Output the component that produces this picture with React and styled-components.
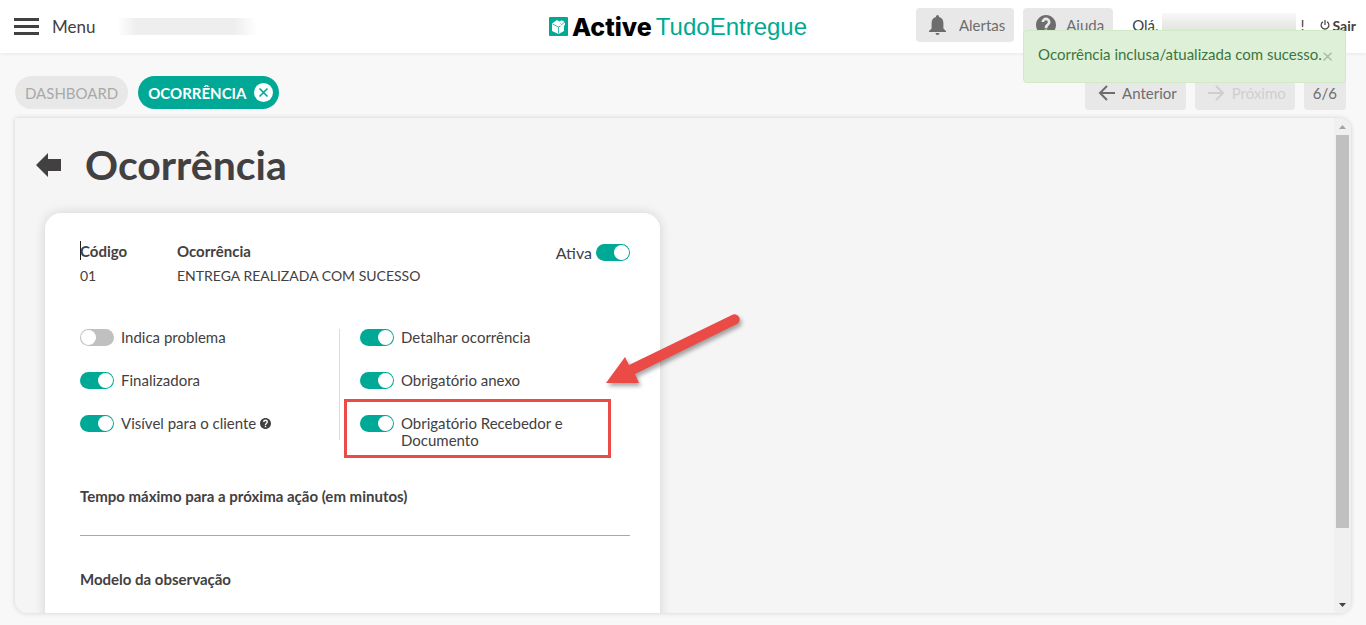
import React, { useState } from 'react';
import styled, { createGlobalStyle } from 'styled-components';

const GlobalStyle = createGlobalStyle`
  * {
    box-sizing: border-box;
  }
  body {
    margin: 0;
    background: #f8f8f8;
    color: #434041;
    font-family: Lato, "Open Sans", sans-serif;
    font-size: 15px;
  }
  button, input {
    font: inherit;
    color: inherit;
  }
`;

const Page = styled.div`
  display: flex;
  flex-direction: column;
  height: 100vh;
  position: relative;
`;

const Header = styled.header`
  display: grid;
  grid-template-columns: 1fr auto 1fr;
  align-items: center;
  height: 53px;
  padding-right: 10px;
  background: #fff;
  box-shadow: 0 0 4px rgba(0, 0, 0, .1);
`;

const HeaderLeft = styled.div`
  display: flex;
  align-items: center;
  gap: 22px;
  padding-left: 14px;
`;

const MenuButton = styled.button`
  display: flex;
  align-items: center;
  gap: 13px;
  padding: 0;
  border: none;
  background: none;
  font-size: 17px;
`;

const CompanyName = styled.span`
  width: 140px;
  height: 17px;
  background: linear-gradient(90deg, #eeeeee00, #eee 14%, #eee 84%, #eeeeee00);
`;

const UserName = styled.span`
  width: 134px;
  height: 24px;
  background: linear-gradient(#f8f8f8, #d9ddd6);
`;

const Logo = styled.a`
  display: flex;
  align-items: center;
  gap: 4px;
  color: #00a993;
  text-decoration: none;
  font: 24px/28px "Liberation Sans", Arial, sans-serif;
`;

const LogoStrong = styled.strong`
  color: #000;
  font-family: Inter, sans-serif;
  font-size: 25px;
  font-weight: 800;
`;

const HeaderRight = styled.div`
  display: flex;
  align-items: center;
  align-self: start;
  justify-content: flex-end;
  gap: 9px;
  height: 50px;
`;

const Greeting = styled.div`
  display: flex;
  align-items: center;
  gap: 4px;
  padding: 0 6px 0 10px;
`;

const LogoutButton = styled.button`
  display: flex;
  align-items: center;
  gap: 3px;
  padding: 0;
  border: none;
  background: none;
  font-size: 14px;
  font-weight: bold;
`;

const GreyButton = styled.button`
  display: flex;
  align-items: center;
  justify-content: center;
  gap: ${props => props.$gap || 7}px;
  height: 34px;
  padding: 0 9px 0 ${props => props.$plain ? 9 : 13}px;
  border: none;
  border-radius: 4px;
  background: #e8e8e8;
  color: #6d6d6d;
  &:disabled {
    color: #cfcfcf;
  }
`;

const Toolbar = styled.div`
  display: flex;
  align-items: flex-start;
  justify-content: space-between;
  padding: 23px 20px 8px 15px;
`;

const Tabs = styled.nav`
  display: flex;
  gap: 10px;
`;

const Tab = styled.div`
  display: flex;
  align-items: center;
  gap: 8px;
  height: 33px;
  padding: 0 ${props => props.$active ? 6 : 10}px 0 10px;
  border-radius: 17px;
  background: ${props => props.$active ? '#00a996' : '#e8e8e8'};
  font-weight: ${props => props.$active ? 'bold' : 'normal'};
`;

const TabLink = styled.a`
  color: ${props => props.$active ? '#fff' : '#a9a9a9'};
  text-decoration: none;
`;

const CloseTab = styled.button`
  display: flex;
  padding: 0;
  border: none;
  background: none;
`;

const Pager = styled.div`
  display: flex;
  gap: 9px;
`;

const Panel = styled.main`
  display: flex;
  flex: 1;
  min-height: 0;
  margin: 0 15px 12px;
  border-radius: 0 12px 12px 12px;
  background: #f5f5f5;
  box-shadow: 0 0 5px rgba(0, 0, 0, .16);
  overflow: hidden;
`;

const PanelBody = styled.div`
  flex: 1;
  padding: 19px 20px 0;
  overflow: hidden;
`;

const ScrollRail = styled.div`
  display: flex;
  flex-direction: column;
  align-items: center;
  width: 17px;
  padding: 6px 0 5px;
  background: #f0f0f0;
`;

const ScrollTrack = styled.div`
  flex: 1;
  width: 13px;
  margin: 5px 0;
`;

const ScrollThumb = styled.div`
  height: 85%;
  background: #c0c0c0;
`;

const TitleRow = styled.div`
  display: flex;
  align-items: center;
  gap: 24px;
  padding-left: 1px;
  margin-bottom: 20px;
`;

const BackButton = styled.button`
  display: flex;
  padding: 0;
  border: none;
  background: none;
`;

const Title = styled.h1`
  margin: 0;
  font-size: 41px;
  line-height: 56px;
`;

const Card = styled.section`
  width: 100%;
  max-width: 615px;
  margin-left: 10px;
  padding: 28px 30px 60px 35px;
  border-radius: 16px;
  background: #fff;
  box-shadow: 0 0 12px rgba(0, 0, 0, .14);
`;

const Summary = styled.div`
  display: grid;
  grid-template-columns: 97px 1fr auto;
  margin-bottom: 43px;
`;

const Field = styled.div`
  display: flex;
  flex-direction: column;
  gap: 5px;
  line-height: 20px;
`;

const FieldLabel = styled.strong`
  position: relative;
`;

const FieldValue = styled.span`
  font-size: 14px;
`;

const Caret = styled.span`
  position: absolute;
  left: 0;
  top: 0;
  width: 1px;
  height: 19px;
  background: #222;
`;

const Options = styled.div`
  display: grid;
  grid-template-columns: 260px 1fr;
  margin-bottom: 37px;
`;

const OptionColumn = styled.div`
  display: flex;
  flex-direction: column;
  gap: 26px;
  align-self: start;
  padding: ${props => props.$divided ? '0 0 8px' : '0 30px 0 20px'};
  border-right: ${props => props.$divided ? '1px solid #dcdcdc' : 'none'};
`;

const Option = styled.div`
  display: flex;
  align-items: flex-start;
  gap: ${props => props.$tight ? 4 : 7}px;
  position: relative;
  line-height: 17px;
  height: ${props => props.$tight ? '23px' : 'auto'};
  padding-top: ${props => props.$tight ? 3 : 0}px;
  font-size: ${props => props.$tight ? 16 : 15}px;
`;

const Switch = styled.input`
  flex: none;
  appearance: none;
  width: 34px;
  height: 17px;
  margin: 0;
  padding: 1px;
  border-radius: 9px;
  background: #c0c0c0;
  &::before {
    content: '';
    display: block;
    width: 15px;
    height: 15px;
    border-radius: 50%;
    background: #fff;
  }
  &:checked {
    background: #00a996;
  }
  &:checked::before {
    margin-left: auto;
  }
`;

const Highlight = styled.div`
  position: absolute;
  left: -16px;
  top: -16px;
  width: 267px;
  height: 59px;
  border: 3px solid #eb4b46;
  pointer-events: none;
`;

const Pointer = styled.svg`
  position: absolute;
  left: 240px;
  top: -114px;
  pointer-events: none;
  filter: drop-shadow(2px 3px 2px rgba(0, 0, 0, .35));
`;

const InputGroup = styled.div`
  display: flex;
  flex-direction: column;
  margin-bottom: 33px;
  line-height: 20px;
`;

const InputLabel = styled.label`
  font-weight: bold;
`;

const TextInput = styled.input`
  height: 30px;
  padding: 0;
  border: none;
  border-bottom: 1px solid #a9a9a9;
  background: none;
  outline: none;
`;

const Toast = styled.div`
  display: flex;
  align-items: flex-start;
  position: absolute;
  top: 30px;
  right: 20px;
  width: 323px;
  height: 53px;
  padding: 13px 14px;
  border: 1px solid #d0e9c6;
  border-radius: 4px;
  background: #dff0d8;
  color: #3c763d;
  line-height: 20px;
  white-space: nowrap;
`;

const ToastClose = styled.button`
  padding: 0;
  border: none;
  background: none;
  color: #a9bda5;
  font-size: 20px;
  line-height: 22px;
`;

const HamburgerIcon = () => (
  <svg width="25" height="17" viewBox="0 0 25 17" fill="#434041">
    <path d="M0 0h25v3H0zM0 7h25v3H0zM0 14h25v3H0z" />
  </svg>
);

const LogoIcon = () => (
  <svg width="19" height="19" viewBox="0 0 19 19">
    <rect width="19" height="19" rx="1" fill="#00a993" />
    <path d="M3 6.500L8 3l2.500 1.500a3 3 0 1 1 4.500 4.500v5L9.500 17 3 14z" fill="#fff" />
    <path d="M3.500 7l6 3M9.500 10v6.500M9.500 10l2-1M11.500 6.500l1.200 1.200L16 4.500" fill="none" stroke="#00a993" strokeWidth=".8" />
  </svg>
);

const BellIcon = () => (
  <svg width="17" height="20" viewBox="0 0 17 20" fill="#6d6d6d">
    <path d="M8.500 0a1.500 1.500 0 0 0-1.500 1.500v.6C4.200 2.800 2.600 5 2.600 8v5.500L0 16v1h17v-1l-2.600-2.500V8c0-3-1.600-5.200-4.400-5.900v-.6A1.500 1.500 0 0 0 8.500 0zM6.500 18a2 2 0 0 0 4 0z" />
  </svg>
);

const HelpIcon = ({ size, color }) => (
  <svg width={size} height={size} viewBox="2 2 20 20" fill={color}>
    <path d="M12 2C6.480 2 2 6.480 2 12s4.480 10 10 10 10-4.480 10-10S17.520 2 12 2zm1.300 17h-2.600v-2.600h2.600V19zm2.500-7.700l-.9.900c-.9.900-1.500 1.500-1.500 3h-2.700v-.6c0-1.100.5-2.100 1.200-2.800l1.300-1.300c.4-.3.600-.8.600-1.400a1.800 1.800 0 0 0-3.600 0H7.500a4.500 4.500 0 0 1 9 0c0 .9-.2 1.600-.7 2.200z" />
  </svg>
);

const ArrowIcon = ({ flip }) => (
  <svg width="17" height="16" viewBox="0 0 17 16" fill="none" stroke="currentColor" strokeWidth="2">
    <path d={flip ? 'M0 8h15M8 1l7 7-7 7' : 'M17 8H2M9 1L2 8l7 7'} />
  </svg>
);

const PowerIcon = () => (
  <svg width="10" height="10" viewBox="0 0 10 10" fill="none" stroke="#434041" strokeWidth="1.200">
    <path d="M3 1.800a3.900 3.900 0 1 0 4 0M5 0v5" />
  </svg>
);

const CloseIcon = () => (
  <svg width="19" height="19" viewBox="0 0 19 19">
    <circle cx="9.500" cy="9.500" r="9.500" fill="#fff" />
    <path d="M5.500 5.500l8 8M13.500 5.500l-8 8" stroke="#00a996" strokeWidth="1.600" />
  </svg>
);

const BackIcon = () => (
  <svg width="25" height="24" viewBox="0 0 25 24" fill="#434041">
    <path d="M0 12L12 0v6h13v12H12v6z" />
  </svg>
);

const Toggle = ({ id, label, checked, help, children }) => {
  const [on, setOn] = useState(checked);
  return (
    <Option>
      <Switch type="checkbox" id={id} checked={on} onChange={() => setOn(!on)} />
      <label htmlFor={id}>
        {label} {help && <HelpIcon size={11} color="#434041" />}
      </label>
      {children}
    </Option>
  );
};

const App = () => {
  const [active, setActive] = useState(true);
  const [toast, setToast] = useState(true);

  return (
    <Page>
      <GlobalStyle />
      <Header>
        <HeaderLeft>
          <MenuButton><HamburgerIcon />Menu</MenuButton>
          <CompanyName />
        </HeaderLeft>
        <Logo href="#">
          <LogoIcon />
          <LogoStrong>Active</LogoStrong>
          TudoEntregue
        </Logo>
        <HeaderRight>
          <GreyButton $gap={13}><BellIcon />Alertas</GreyButton>
          <GreyButton $gap={10}><HelpIcon size={20} color="#6d6d6d" />Ajuda</GreyButton>
          <Greeting>Olá, <UserName /> !</Greeting>
          <LogoutButton><PowerIcon />Sair</LogoutButton>
        </HeaderRight>
      </Header>

      <Toolbar>
        <Tabs>
          <Tab><TabLink href="#">DASHBOARD</TabLink></Tab>
          <Tab $active>
            <TabLink href="#" $active>OCORRÊNCIA</TabLink>
            <CloseTab aria-label="Fechar"><CloseIcon /></CloseTab>
          </Tab>
        </Tabs>
        <Pager>
          <GreyButton><ArrowIcon />Anterior</GreyButton>
          <GreyButton disabled><ArrowIcon flip />Próximo</GreyButton>
          <GreyButton $plain>6/6</GreyButton>
        </Pager>
      </Toolbar>

      <Panel>
        <PanelBody>
          <TitleRow>
            <BackButton aria-label="Voltar"><BackIcon /></BackButton>
            <Title>Ocorrência</Title>
          </TitleRow>
          <Card>
            <Summary>
              <Field>
                <FieldLabel><Caret />Código</FieldLabel>
                <FieldValue>01</FieldValue>
              </Field>
              <Field>
                <FieldLabel>Ocorrência</FieldLabel>
                <FieldValue>ENTREGA REALIZADA COM SUCESSO</FieldValue>
              </Field>
              <Option $tight>
                <label htmlFor="ativa">Ativa</label>
                <Switch type="checkbox" id="ativa" checked={active} onChange={() => setActive(!active)} />
              </Option>
            </Summary>
            <Options>
              <OptionColumn $divided>
                <Toggle id="problema" label="Indica problema" checked={false} />
                <Toggle id="finalizadora" label="Finalizadora" checked />
                <Toggle id="visivel" label="Visível para o cliente" checked help />
              </OptionColumn>
              <OptionColumn>
                <Toggle id="detalhar" label="Detalhar ocorrência" checked />
                <Toggle id="anexo" label="Obrigatório anexo" checked />
                <Toggle id="recebedor" label="Obrigatório Recebedor e Documento" checked>
                  <Highlight />
                  <Pointer width="150" height="90" viewBox="0 0 150 90" fill="#eb4b46">
                    <path d="M6 82L25 56l4 8L132 14a5 5 0 0 1 5 9L35 73l4 9z" />
                  </Pointer>
                </Toggle>
              </OptionColumn>
            </Options>
            <InputGroup>
              <InputLabel htmlFor="tempo">Tempo máximo para a próxima ação (em minutos)</InputLabel>
              <TextInput id="tempo" type="text" />
            </InputGroup>
            <InputGroup>
              <InputLabel htmlFor="modelo">Modelo da observação</InputLabel>
              <TextInput id="modelo" type="text" />
            </InputGroup>
          </Card>
        </PanelBody>
        <ScrollRail>
          <svg width="7" height="6" viewBox="0 0 7 6" fill="#a3a3a3"><path d="M0 5l3.500-4L7 5z" /></svg>
          <ScrollTrack><ScrollThumb /></ScrollTrack>
          <svg width="7" height="6" viewBox="0 0 7 6" fill="#434343"><path d="M0 1l3.500 4L7 1z" /></svg>
        </ScrollRail>
      </Panel>

      {toast && (
        <Toast role="alert">
          Ocorrência inclusa/atualizada com sucesso.
          <ToastClose aria-label="Fechar aviso" onClick={() => setToast(false)}>×</ToastClose>
        </Toast>
      )}
    </Page>
  );
};

export default App;
